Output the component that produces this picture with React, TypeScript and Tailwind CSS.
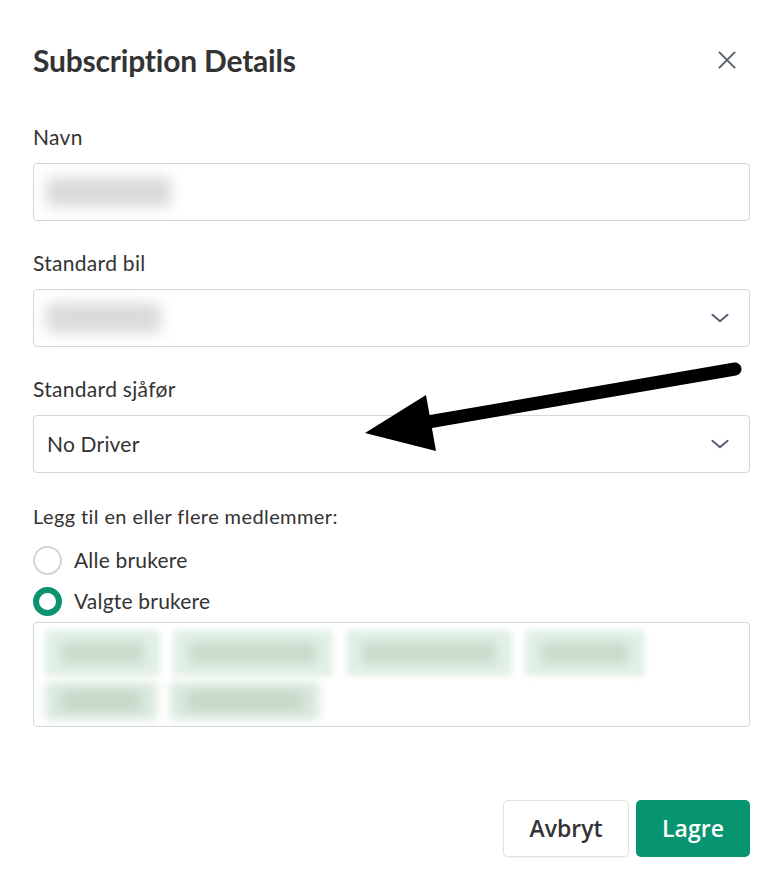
import React from 'react';

function Chevron() {
  return (
    <svg width="26" height="26" viewBox="0 0 24 24" fill="none" stroke="#556070" strokeWidth="1.8" strokeLinecap="round" strokeLinejoin="round">
      <path d="M5 9l7 6 7-6" />
    </svg>
  );
}

function Blurred({ w }: { w: string }) {
  return <div className={`h-[30px] ${w} rounded-[6px] bg-[#dadada] blur-[7px]`} />;
}

export default function App() {
  const chipsRow1 = ['w-[115px]', 'w-[160px]', 'w-[166px]', 'w-[120px]'];
  const chipsRow2 = ['w-[112px]', 'w-[150px]'];

  return (
    <div className="relative w-[783px] h-[884px] bg-white px-[33px] text-[#333] font-['Lato',sans-serif]">
      {/* Header */}
      <div className="flex items-center justify-between pt-[44px]">
        <h2 className="text-[30px] leading-[32px] font-bold text-[#333] tracking-[-0.2px]">Subscription Details</h2>
        <button className="mr-[10px]">
          <svg width="26" height="26" viewBox="0 0 24 24" fill="none" stroke="#5a6068" strokeWidth="1.8" strokeLinecap="round">
            <path d="M5 5l14 14M19 5L5 19" />
          </svg>
        </button>
      </div>

      {/* Navn */}
      <div className="mt-[49px]">
        <label className="block text-[21px] leading-[24px] tracking-[0.3px]">Navn</label>
        <div className="mt-[14px] h-[58px] border border-[#d3d6da] rounded-[4px] flex items-center px-[12px]">
          <Blurred w="w-[125px]" />
        </div>
      </div>

      {/* Standard bil */}
      <div className="mt-[30px]">
        <label className="block text-[21px] leading-[24px] tracking-[0.3px]">Standard bil</label>
        <div className="mt-[14px] h-[58px] border border-[#d3d6da] rounded-[4px] flex items-center justify-between pl-[12px] pr-[16px]">
          <Blurred w="w-[115px]" />
          <Chevron />
        </div>
      </div>

      {/* Standard sjåfør */}
      <div className="mt-[30px]">
        <label className="block text-[21px] leading-[24px] tracking-[0.3px]">Standard sjåfør</label>
        <div className="mt-[14px] h-[58px] border border-[#d3d6da] rounded-[4px] flex items-center justify-between pl-[13px] pr-[16px]">
          <span className="text-[21px] tracking-[0.2px]">No Driver</span>
          <Chevron />
        </div>
      </div>

      {/* Members */}
      <div className="mt-[31px]">
        <p className="text-[20px] leading-[24px] tracking-[0.4px]">Legg til en eller flere medlemmer:</p>
        <div className="mt-[18px] flex flex-col gap-[13px]">
          <label className="flex items-center gap-[12px] h-[28px]">
            <span className="w-[29px] h-[29px] rounded-full border-[2.5px] border-[#d1d5db] bg-white" />
            <span className="text-[21px] tracking-[0.2px]">Alle brukere</span>
          </label>
          <label className="flex items-center gap-[12px] h-[28px]">
            <span className="w-[29px] h-[29px] rounded-full border-[6px] border-[#0b9370] bg-white" />
            <span className="text-[21px] tracking-[0.2px]">Valgte brukere</span>
          </label>
        </div>
        <div className="mt-[7px] h-[105px] border border-[#d3d6da] rounded-[4px] px-[11px] py-[7px] overflow-hidden">
          <div className="flex flex-wrap gap-x-[13px] gap-y-[6px] w-[640px]">
            {chipsRow1.map((w, i) => (
              <div key={i} className={`${w} h-[46px] rounded-[4px] bg-[#e2f1e5] flex items-center px-[16px] blur-[3px]`}>
                <div className="h-[22px] w-full rounded bg-[#c9d9cc] blur-[5px]" />
              </div>
            ))}
            {chipsRow2.map((w, i) => (
              <div key={i} className={`${w} h-[38px] rounded-[4px] bg-[#dcebdf] flex items-center px-[16px] blur-[4px]`}>
                <div className="h-[20px] w-full rounded bg-[#c4d6c8] blur-[5px]" />
              </div>
            ))}
          </div>
        </div>
      </div>

      {/* Footer */}
      <div className="mt-[73px] flex justify-end gap-[7px] font-['Open_Sans',sans-serif]">
        <button className="w-[126px] h-[57px] rounded-[5px] border border-[#e2e2e2] bg-white text-[23px] font-semibold text-[#333] shadow-[0_1px_2px_rgba(0,0,0,0.06)]">
          Avbryt
        </button>
        <button className="w-[114px] h-[57px] rounded-[5px] bg-[#079571] text-[23px] font-semibold text-white">
          Lagre
        </button>
      </div>

      {/* Annotation arrow */}
      <svg className="absolute inset-0 pointer-events-none" width="783" height="884">
        <line x1="735" y1="369" x2="428" y2="422" stroke="#000" strokeWidth="13" strokeLinecap="round" />
        <polygon points="365,433 426,395 436,451" fill="#000" />
      </svg>
    </div>
  );
}
